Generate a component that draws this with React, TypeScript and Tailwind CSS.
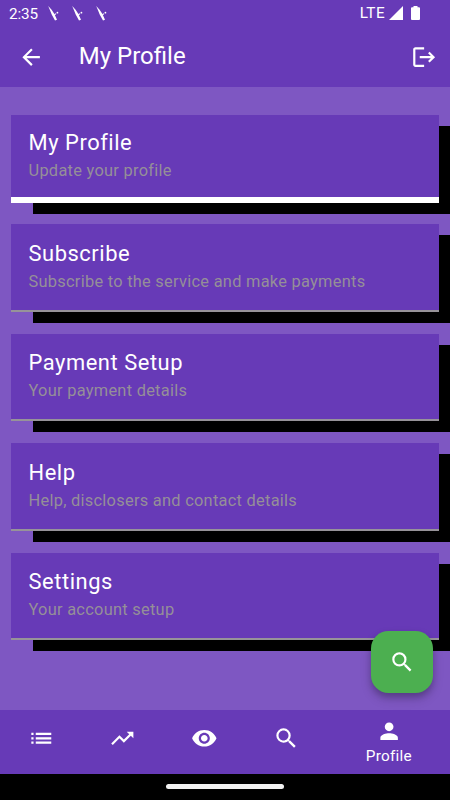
import {
  MdArrowBack,
  MdList,
  MdLogout,
  MdPerson,
  MdRemoveRedEye,
  MdSearch,
  MdTrendingUp,
} from 'react-icons/md'

const menuItems = [
  { title: 'My Profile', subtitle: 'Update your profile', active: true },
  { title: 'Subscribe', subtitle: 'Subscribe to the service and make payments' },
  { title: 'Payment Setup', subtitle: 'Your payment details' },
  { title: 'Help', subtitle: 'Help, disclosers and contact details' },
  { title: 'Settings', subtitle: 'Your account setup' },
]

const navItems = [
  { label: 'Lists', Icon: MdList },
  { label: 'Trends', Icon: MdTrendingUp },
  { label: 'Watch', Icon: MdRemoveRedEye },
  { label: 'Search', Icon: MdSearch },
]

function NotificationIcon() {
  return (
    <svg viewBox="0 0 12 16" className="h-4 w-3" fill="#fff" aria-hidden="true">
      <path d="M0.2 1 3.6 4.8 6.4 9 9 14.8 7 15.4 3.7 9.4 2 5.2z" />
      <path d="M6 9.2 7.8 8.2 8.2 9 6.6 10.4z" />
      <circle cx="9.4" cy="7.7" r="0.9" />
    </svg>
  )
}

function StatusBar() {
  return (
    <div className="flex h-[26px] items-center justify-between pl-[9px] pr-[30px] text-white">
      <div className="flex items-center">
        <span className="w-[39px] pt-[2px] text-[15.3px] leading-[26px] tracking-[-0.1px]">2:35</span>
        <div className="flex gap-3">
          <NotificationIcon />
          <NotificationIcon />
          <NotificationIcon />
        </div>
      </div>
      <div className="flex items-center">
        <span className="text-[15.3px] leading-[26px] tracking-[0.4px]">LTE</span>
        <svg viewBox="0 0 14 14" className="ml-1 h-3.5 w-3.5" fill="#fff" aria-hidden="true">
          <path d="M14 0v14H0z" />
        </svg>
        <svg viewBox="0 0 9 14" className="ml-2 h-3.5 w-[9px]" fill="#fff" aria-hidden="true">
          <path d="M2.5 0h4v1.3H8q1 0 1 1V13q0 1-1 1H1q-1 0-1-1V2.3q0-1 1-1h1.5z" />
        </svg>
      </div>
    </div>
  )
}

function MenuCard({ title, subtitle, active }: { title: string; subtitle: string; active?: boolean }) {
  return (
    <div
      className={`h-[87.5px] shrink-0 bg-[#673ab7] px-[17.5px] shadow-[22px_11px_0_0_#000] ${
        active ? 'border-b-[6px] border-white pt-[14px]' : 'border-b-2 border-[#979399] pt-[15.4px]'
      }`}
    >
      <h2 className="text-[21.9px] leading-[27px] tracking-[0.55px] text-white">{title}</h2>
      <p className="mt-[3px] text-[16.4px] leading-[24px] tracking-[0.27px] text-[#958f98]">{subtitle}</p>
    </div>
  )
}

export default function App() {
  return (
    <div className="relative flex h-[800px] w-[450px] flex-col overflow-hidden bg-[#7e57c2] font-['Roboto',sans-serif]">
      <header className="h-[87px] shrink-0 bg-[#673ab7] text-white">
        <StatusBar />
        <div className="flex h-[61px] items-center pl-[17.5px] pr-[13px]">
          <button aria-label="Back" className="pt-px">
            <MdArrowBack className="size-[26.25px]" />
          </button>
          <h1 className="ml-[35px] flex-1 pb-px text-[24px] leading-[30px]">My Profile</h1>
          <button aria-label="Log out" className="pt-px">
            <MdLogout className="size-[26.25px]" />
          </button>
        </div>
      </header>

      <main className="flex h-[623px] shrink-0 flex-col gap-[21.875px] px-[11px] pt-7">
        {menuItems.map((item) => (
          <MenuCard key={item.title} {...item} />
        ))}
      </main>

      <nav className="flex h-[64px] shrink-0 bg-[#673ab7] text-white">
        {navItems.map(({ label, Icon }) => (
          <button key={label} aria-label={label} className="flex w-[81.8px] items-center justify-center pb-[7px]">
            <Icon className="size-[26.6px]" />
          </button>
        ))}
        <button className="flex flex-1 flex-col items-center pt-2 pl-[0.5px]">
          <MdPerson className="size-[26.25px]" />
          <span className="mt-px text-[15.3px] leading-[22px] tracking-[0.27px]">Profile</span>
        </button>
      </nav>

      <div className="flex flex-1 justify-center bg-black pt-[10px]">
        <div className="h-[5px] w-[118px] rounded-full bg-[#f2f2f2]" />
      </div>

      <button
        aria-label="Search"
        className="absolute right-[17.5px] bottom-[107.5px] flex size-[61.25px] items-center justify-center rounded-[17.5px] bg-[#4caf50] text-white shadow-[0_4px_6px_rgba(0,0,0,0.2),0_6px_12px_rgba(0,0,0,0.14)]"
      >
        <MdSearch className="size-[26.25px]" />
      </button>
    </div>
  )
}
